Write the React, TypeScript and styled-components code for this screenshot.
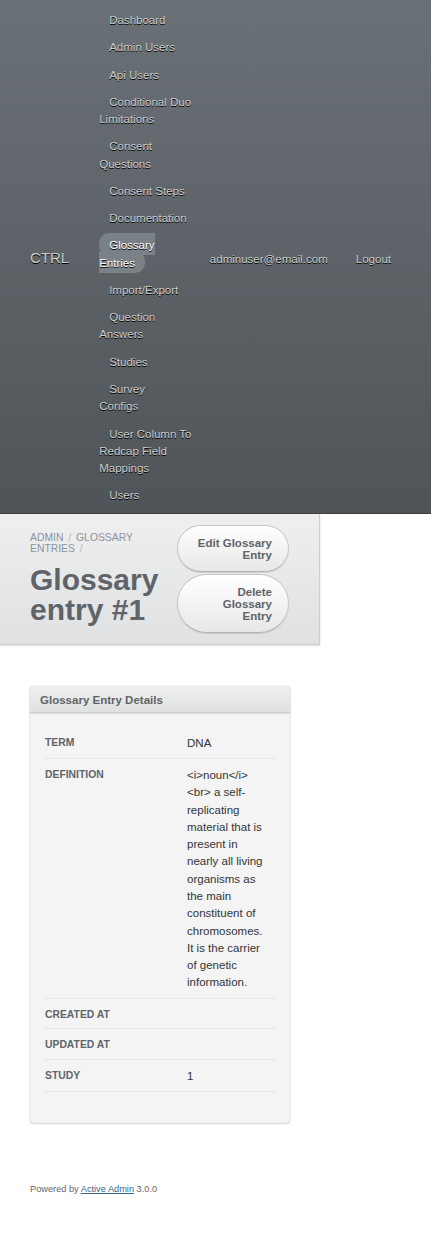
import React from "react";
import styled, { createGlobalStyle } from "styled-components";

const GlobalStyle = createGlobalStyle`
  html, body {
    margin: 0;
    padding: 0;
    background: #ffffff;
  }
  body {
    font-family: "Liberation Sans", Helvetica, Arial, sans-serif;
    font-size: 11.52px;
    line-height: 1.5;
    color: #323537;
  }
  * { box-sizing: border-box; }
`;

const Header = styled.header`
  display: flex;
  align-items: center;
  padding: 0 30px;
  background: linear-gradient(180deg, #6a7176 0%, #4f5458 100%);
  border-bottom: 1px solid #3a3e41;
  text-shadow: #000 0 1px 0;
`;

const SiteTitle = styled.h1`
  margin: 0;
  padding: 3px 30px 0 0;
  font-size: 15px;
  font-weight: normal;
  line-height: 1;
  color: #cdcdcd;
  white-space: nowrap;
`;

const Tabs = styled.ul`
  flex: 1;
  min-width: 0;
  list-style: none;
  margin: 0;
  padding: 12px 0 8px;
  display: flex;
  flex-direction: column;
  gap: 10px;
`;

const Tab = styled.li`
  display: block;
  margin-right: 4px;
`;

const TabLink = styled.a<{ $current?: boolean }>`
  padding: 6px 10px 4px 10px;
  border-radius: 10px;
  text-decoration: none;
  color: ${(p) => (p.$current ? "#ffffff" : "#cdcdcd")};
  background: ${(p) => (p.$current ? "#7b8287" : "transparent")};
`;

const UtilityNav = styled.ul`
  list-style: none;
  margin: 0;
  padding: 4px 0 0 0;
  display: flex;
  gap: 8px;
  white-space: nowrap;
`;

const UtilityLink = styled.a`
  display: inline-block;
  padding: 6px 10px 4px 10px;
  color: #cdcdcd;
  text-decoration: none;
`;

const TitleBar = styled.div`
  width: 320px;
  display: grid;
  grid-template-columns: 1fr 112px;
  column-gap: 16px;
  align-items: center;
  padding: 11px 30px;
  background: linear-gradient(180deg, #efefef 0%, #dfe1e2 100%);
  border-bottom: 1px solid #cdcdcd;
  border-right: 1px solid #cdcdcd;
  box-shadow: 0 1px 2px rgba(0, 0, 0, 0.15);
`;

const TitleLeft = styled.div`
  min-width: 0;
`;

const Breadcrumb = styled.div`
  font-size: 10.37px;
  line-height: 11px;
  text-transform: uppercase;
  color: #8a949e;
  margin-bottom: 11px;
`;

const Crumb = styled.a`
  color: #8a949e;
  text-decoration: none;
`;

const Sep = styled.span`
  color: #b3bcc1;
  margin: 0 2px;
`;

const PageTitle = styled.h2`
  margin: 0;
  font-size: 30px;
  line-height: 30px;
  font-weight: bold;
  color: #5e6469;
`;

const Actions = styled.div`
  display: flex;
  flex-direction: column;
  gap: 2px;
`;

const ActionButton = styled.a`
  display: block;
  text-align: right;
  padding: 11px 16px 10px;
  border: 1px solid #c7c7c7;
  border-bottom-color: #b2b2b2;
  border-radius: 200px;
  background: linear-gradient(180deg, #ffffff 0%, #e7e7e7 100%);
  box-shadow: 0 1px 1px rgba(0, 0, 0, 0.1), inset 0 1px 0 rgba(255, 255, 255, 0.8);
  color: #5e6469;
  font-weight: bold;
  line-height: 12px;
  text-decoration: none;
`;

const Main = styled.main`
  padding: 41px 30px 30px;
`;

const Panel = styled.section`
  width: 260px;
  background: #f4f4f4;
  border-radius: 4px;
  box-shadow: 0 0 1px rgba(0, 0, 0, 0.45), 0 1px 2px rgba(0, 0, 0, 0.12);
`;

const PanelTitle = styled.h3`
  margin: 0;
  padding: 6px 10px 3px;
  font-size: 11.52px;
  line-height: 1.5;
  font-weight: bold;
  color: #5e6469;
  background: linear-gradient(180deg, #efefef 0%, #dfe1e2 100%);
  border-bottom: 1px solid #cdcdcd;
  border-radius: 4px 4px 0 0;
  box-shadow: 0 1px 2px rgba(0, 0, 0, 0.12);
`;

const PanelContents = styled.div`
  padding: 14px 14px 31px 15px;
`;

const AttrRow = styled.div`
  display: grid;
  grid-template-columns: 130px 1fr;
  border-bottom: 1px solid #e4e4e4;
`;

const AttrLabel = styled.div`
  padding: 8px 12px 6px 0;
  font-size: 10.37px;
  line-height: 1.5;
  font-weight: bold;
  text-transform: uppercase;
  color: #5e6469;
`;

const AttrValue = styled.div`
  padding: 8px 12px 6px 12px;
  color: #323537;
`;

const Footer = styled.footer`
  padding: 30px 30px 30px;
  font-size: 9.22px;
  color: #666666;
`;

const FooterLink = styled.a`
  color: #38678b;
  text-decoration: underline;
`;

const tabs = [
  "Dashboard",
  "Admin Users",
  "Api Users",
  "Conditional Duo Limitations",
  "Consent Questions",
  "Consent Steps",
  "Documentation",
  "Glossary Entries",
  "Import/Export",
  "Question Answers",
  "Studies",
  "Survey Configs",
  "User Column To Redcap Field Mappings",
  "Users",
];

const definition =
  "<i>noun</i> <br> a self-replicating material that is present in nearly all living organisms as the main constituent of chromosomes. It is the carrier of genetic information.";

const attributes: { label: string; value: string }[] = [
  { label: "Term", value: "DNA" },
  { label: "Definition", value: definition },
  { label: "Created At", value: "" },
  { label: "Updated At", value: "" },
  { label: "Study", value: "1" },
];

export default function App() {
  return (
    <>
      <GlobalStyle />
      <Header>
        <SiteTitle>CTRL</SiteTitle>
        <Tabs>
          {tabs.map((t) => (
            <Tab key={t}>
              <TabLink href="#" $current={t === "Glossary Entries"}>
                {t}
              </TabLink>
            </Tab>
          ))}
        </Tabs>
        <UtilityNav>
          <li>
            <UtilityLink href="#">adminuser@email.com</UtilityLink>
          </li>
          <li>
            <UtilityLink href="#">Logout</UtilityLink>
          </li>
        </UtilityNav>
      </Header>
      <TitleBar>
        <TitleLeft>
          <Breadcrumb>
            <Crumb href="#">Admin</Crumb> <Sep>/</Sep>{" "}
            <Crumb href="#">Glossary Entries</Crumb> <Sep>/</Sep>
          </Breadcrumb>
          <PageTitle>Glossary entry #1</PageTitle>
        </TitleLeft>
        <Actions>
          <ActionButton href="#">Edit Glossary Entry</ActionButton>
          <ActionButton href="#">Delete Glossary Entry</ActionButton>
        </Actions>
      </TitleBar>
      <Main>
        <Panel>
          <PanelTitle>Glossary Entry Details</PanelTitle>
          <PanelContents>
            {attributes.map((a) => (
              <AttrRow key={a.label}>
                <AttrLabel>{a.label}</AttrLabel>
                <AttrValue>{a.value}</AttrValue>
              </AttrRow>
            ))}
          </PanelContents>
        </Panel>
      </Main>
      <Footer>
        Powered by <FooterLink href="#">Active Admin</FooterLink> 3.0.0
      </Footer>
    </>
  );
}
